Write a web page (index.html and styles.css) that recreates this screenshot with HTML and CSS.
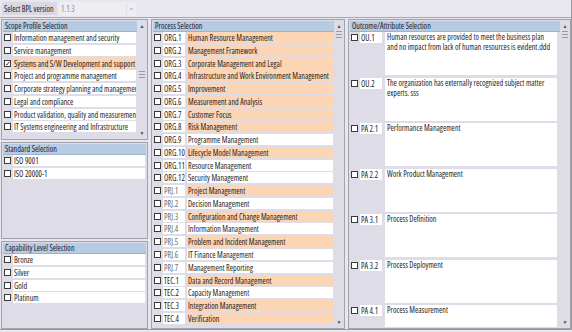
FILE: index.html
```html
<!doctype html>
<html lang="en">
  <head>
    <meta charset="UTF-8" />
    <title>BPL Selection</title>
    <link rel="stylesheet" href="styles.css">
  </head>
  <body>
    <div class="window">
      <div class="topbar">
        <span class="lbl">Select BPL version</span>
        <div class="combo">
          <span>1.1.3</span>
          <span class="drop">&#8964;</span>
        </div>
      </div>

      <div class="main">
        <div class="col-left">
          <div class="panel scope">
            <div class="body">
              <div class="head">Scope Profile Selection</div>
              <div class="list">
                <div class="row"><span class="chk"></span><span class="txt">Information management and security</span></div>
                <div class="row"><span class="chk"></span><span class="txt">Service management</span></div>
                <div class="row"><span class="chk on">&#10003;</span><span class="txt hl">Systems and S/W Development and support</span></div>
                <div class="row"><span class="chk"></span><span class="txt">Project and programme management</span></div>
                <div class="row"><span class="chk"></span><span class="txt">Corporate strategy planning and management</span></div>
                <div class="row"><span class="chk"></span><span class="txt">Legal and compliance</span></div>
                <div class="row"><span class="chk"></span><span class="txt">Product validation, quality and measurement</span></div>
                <div class="row"><span class="chk"></span><span class="txt">IT Systems engineering and Infrastructure</span></div>
              </div>
            </div>
            <div class="sbar"><span class="up">&#9650;</span><span class="thumb"></span><span class="dn">&#9660;</span></div>
          </div>

          <div class="panel std">
            <div class="body">
              <div class="head">Standard Selection</div>
              <div class="list">
                <div class="row"><span class="chk"></span><span class="txt">ISO 9001</span></div>
                <div class="row"><span class="chk"></span><span class="txt">ISO 20000-1</span></div>
              </div>
            </div>
          </div>

          <div class="panel cap">
            <div class="body">
              <div class="head">Capability Level Selection</div>
              <div class="list">
                <div class="row"><span class="chk"></span><span class="txt">Bronze</span></div>
                <div class="row"><span class="chk"></span><span class="txt">Silver</span></div>
                <div class="row"><span class="chk"></span><span class="txt">Gold</span></div>
                <div class="row"><span class="chk"></span><span class="txt">Platinum</span></div>
              </div>
            </div>
          </div>
        </div>

        <div class="panel proc">
          <div class="body">
            <div class="head">Process Selection</div>
            <div class="list" id="procList"></div>
          </div>
          <div class="sbar"><span class="up">&#9650;</span><span class="thumb"></span><span class="dn">&#9660;</span></div>
        </div>

        <div class="panel outc">
          <div class="body">
            <div class="head">Outcome/Attribute Selection</div>
            <div class="items" id="outList"></div>
          </div>
          <div class="sbar"><span class="up">&#9650;</span><span class="thumb"></span><span class="dn">&#9660;</span></div>
        </div>
      </div>
    </div>

    <script>
      // process rows: code, name, highlighted
      var procs = [
        ['ORG.1', 'Human Resource Management', 1],
        ['ORG.2', 'Management Framework', 1],
        ['ORG.3', 'Corporate Management and Legal', 1],
        ['ORG.4', 'Infrastructure and Work Environment Management', 1],
        ['ORG.5', 'Improvement', 1],
        ['ORG.6', 'Measurement and Analysis', 1],
        ['ORG.7', 'Customer Focus', 1],
        ['ORG.8', 'Risk Management', 1],
        ['ORG.9', 'Programme Management', 0],
        ['ORG.10', 'Lifecycle Model Management', 1],
        ['ORG.11', 'Resource Management', 0],
        ['ORG.12', 'Security Management', 0],
        ['PRJ.1', 'Project Management', 1],
        ['PRJ.2', 'Decision Management', 0],
        ['PRJ.3', 'Configuration and Change Management', 1],
        ['PRJ.4', 'Information Management', 0],
        ['PRJ.5', 'Problem and Incident Management', 1],
        ['PRJ.6', 'IT Finance Management', 0],
        ['PRJ.7', 'Management Reporting', 0],
        ['TEC.1', 'Data and Record Management', 1],
        ['TEC.2', 'Capacity Management', 0],
        ['TEC.3', 'Integration Management', 1],
        ['TEC.4', 'Verification', 1]
      ]

      var outs = [
        ['OU.1', 'Human resources are provided to meet the business plan and no impact from lack of human resources is evident.ddd'],
        ['OU.2', 'The organization has externally recognized subject matter experts. sss'],
        ['PA 2.1', 'Performance Management'],
        ['PA 2.2', 'Work Product Management'],
        ['PA 3.1', 'Process Definition'],
        ['PA 3.2', 'Process Deployment'],
        ['PA 4.1', 'Process Measurement']
      ]

      var procList = document.getElementById('procList')
      procs.forEach(function (p) {
        var cls = p[2] ? ' hl' : ''
        var dim = p[0].indexOf('PRJ') === 0 ? ' dim' : ''
        procList.innerHTML +=
          '<div class="row"><span class="chk"></span>' +
          '<span class="code' + cls + dim + '">' + p[0] + '</span>' +
          '<span class="txt' + cls + '">' + p[1] + '</span></div>'
      })

      var outList = document.getElementById('outList')
      outs.forEach(function (o) {
        outList.innerHTML +=
          '<div class="item"><span class="chk"></span>' +
          '<span class="code">' + o[0] + '</span>' +
          '<span class="desc">' + o[1] + '</span></div>'
      })
    </script>
  </body>
</html>
```

FILE: styles.css
```css
* {
  padding: 0;
  margin: 0;
  box-sizing: border-box;
}
body {
  width: 572px;
  height: 332px;
  background-color: #e8e6ee;
  font-family: "Open Sans", sans-serif;
  font-stretch: 75%;
  font-size: 8px;
  color: #1c1c1c;
  overflow: hidden;
}
.window {
  height: 330px;
  border-bottom: 1px solid #9a9aa2;
  border-right: 1px solid #9a9aa2;
  overflow: hidden;
}
.topbar {
  height: 18px;
  display: flex;
  align-items: center;
  padding-left: 2px;
  border-bottom: 1px solid #a8a8b0;
  white-space: nowrap;
}
.lbl {
  background-color: #dad8e2;
  padding: 1px 2px;
  width: 55px;
}
.combo {
  margin-left: 2px;
  width: 77px;
  height: 14px;
  display: flex;
  align-items: center;
  justify-content: space-between;
  padding-left: 2px;
  background-color: #eeedf2;
  color: #8a8a90;
}
.drop {
  width: 9px;
  height: 12px;
  margin-right: 1px;
  text-align: center;
  line-height: 8px;
  color: #a0a0a8;
  border-left: 1px solid #e0dfe6;
}
.main {
  display: flex;
  gap: 3px;
  padding: 1px 0 0 1px;
  height: 311px;
}
.col-left {
  width: 147px;
  display: flex;
  flex-direction: column;
  gap: 2px;
}
.panel {
  display: flex;
  border: 1px solid #a2a2aa;
  background-color: #dedce6;
  padding: 1px;
  overflow: hidden;
}
.body {
  flex: 1;
  display: flex;
  flex-direction: column;
  min-width: 0;
  overflow: hidden;
}
.head {
  height: 11px;
  flex: none;
  line-height: 10px;
  padding-left: 2px;
  background-color: #b7cbe3;
  border-bottom: 1px solid #9fb2cc;
  color: #1a2230;
}
.list {
  display: flex;
  flex-direction: column;
  gap: 1.77px;
}
.row {
  display: flex;
  align-items: center;
  height: 11px;
  flex: none;
}
.chk {
  width: 7px;
  height: 7px;
  margin: 0 2px 0 1px;
  flex: none;
  background-color: #fff;
  border: 1px solid #3a3a3a;
  font-size: 7px;
  line-height: 5px;
  text-align: center;
  color: #222;
}
.txt {
  flex: 1;
  height: 11px;
  line-height: 11px;
  padding-left: 1px;
  margin-right: 1px;
  background-color: #fff;
  white-space: nowrap;
  overflow: hidden;
}
.hl {
  background-color: #fcd5b4;
}
.scope {
  height: 121px;
}
.scope .thumb {
  margin-top: 40px;
}
.std {
  height: 97px;
}
.cap {
  flex: 1;
}
.sbar {
  width: 8px;
  flex: none;
  display: flex;
  flex-direction: column;
  align-items: center;
  justify-content: space-between;
  margin-left: 1px;
  color: #4a5060;
  font-size: 5px;
  line-height: 10px;
}
.thumb {
  width: 6px;
  height: 7px;
  margin-bottom: auto;
  border-top: 1px solid #9a9aa2;
  border-bottom: 1px solid #9a9aa2;
  background: linear-gradient(#dedce6 2px, #9a9aa2 2px, #9a9aa2 3px, #dedce6 3px);
}
.proc {
  width: 194px;
}
.code {
  width: 22px;
  flex: none;
  height: 11px;
  line-height: 11px;
  margin-right: 2px;
  padding-left: 1px;
  background-color: #fff;
  white-space: nowrap;
  overflow: hidden;
}
.dim {
  color: #6a6a6a;
}
.outc {
  flex: 1;
}
.outc .chk {
  margin-right: 2px;
}
.items {
  display: flex;
  flex-direction: column;
  gap: 2.5px;
}
.item {
  display: flex;
  align-items: flex-start;
  height: 43px;
  flex: none;
}
.item .chk {
  margin-top: 2px;
}
.item .code {
  margin-right: 3px;
}
.desc {
  flex: 1;
  height: 43px;
  margin-right: 3px;
  padding: 0 4px 0 2px;
  line-height: 10px;
  background-color: #fff;
}
```
